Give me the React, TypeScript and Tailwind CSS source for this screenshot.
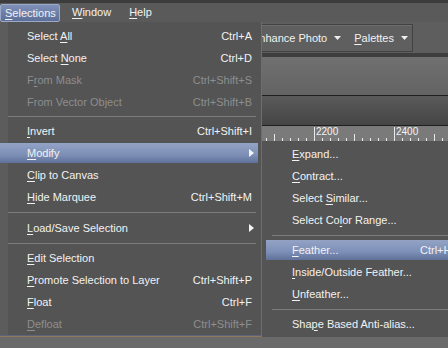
import React from "react";

type Item =
  | { sep: number }
  | { l: string; k?: string; d?: boolean; hi?: boolean; arrow?: boolean };

function Label({ t }: { t: string }) {
  const i = t.indexOf("&");
  if (i < 0) return <>{t}</>;
  return (
    <>
      {t.slice(0, i)}
      <span className="underline underline-offset-[2px] decoration-1">{t[i + 1]}</span>
      {t.slice(i + 2)}
    </>
  );
}

const mainItems: Item[] = [
  { l: "Select &All", k: "Ctrl+A" },
  { l: "Select &None", k: "Ctrl+D" },
  { l: "F&rom Mask", k: "Ctrl+Shift+S", d: true },
  { l: "From Vector Ob&ject", k: "Ctrl+Shift+B", d: true },
  { sep: 7 },
  { l: "&Invert", k: "Ctrl+Shift+I" },
  { l: "&Modify", hi: true, arrow: true },
  { l: "&Clip to Canvas" },
  { l: "&Hide Marquee", k: "Ctrl+Shift+M" },
  { sep: 9 },
  { l: "&Load/Save Selection", arrow: true },
  { sep: 8 },
  { l: "&Edit Selection" },
  { l: "&Promote Selection to Layer", k: "Ctrl+Shift+P" },
  { l: "&Float", k: "Ctrl+F" },
  { l: "&Defloat", k: "Ctrl+Shift+F", d: true },
];

const subItems: Item[] = [
  { l: "&Expand..." },
  { l: "&Contract..." },
  { l: "Select &Similar..." },
  { l: "Select Co&lor Range..." },
  { sep: 8 },
  { l: "&Feather...", k: "Ctrl+H", hi: true },
  { l: "&Inside/Outside Feather..." },
  { l: "&Unfeather..." },
  { sep: 8 },
  { l: "Sha&pe Based Anti-alias..." },
];

function Arrow() {
  return (
    <svg width="5" height="8" viewBox="0 0 5 8" className="absolute right-[4px] top-[6px]">
      <path d="M0 0 L5 4 L0 8 Z" fill="#f4f4f4" />
    </svg>
  );
}

function MainMenu() {
  return (
    <div className="absolute left-0 top-[22px] w-[262px] h-[315px] bg-[linear-gradient(to_right,#5c5c5c_8px,#545454_8px)] border-r border-r-[#6e6e6e] border-b border-b-[#8c7a5c] pt-[3px] shadow-[inset_0_-1px_0_#5d6478]">
      {mainItems.map((it, idx) =>
        "sep" in it ? (
          <div key={idx} className="flex items-center pl-[8px] pr-[5px]" style={{ height: it.sep }}>
            <div className="h-px w-full bg-[#7c7c7c]" />
          </div>
        ) : (
          <div key={idx} className="h-[22px] flex items-center">
            <div
              className={
                "relative flex items-center w-[258px] h-[20px] pl-[27px] pr-[6px] whitespace-nowrap " +
                (it.hi ? "bg-[linear-gradient(to_bottom,#93a3c6,#7d8fb6_60%,#5f7099)]" : "")
              }
            >
              <span className={"flex-1 " + (it.d ? "text-[#8e8e8e]" : "text-[#f2f2f2]")}>
                <Label t={it.l} />
              </span>
              {it.k && <span className={it.d ? "text-[#8e8e8e]" : "text-[#f2f2f2]"}>{it.k}</span>}
              {it.arrow && <Arrow />}
            </div>
          </div>
        )
      )}
    </div>
  );
}

function SubMenu() {
  return (
    <div className="absolute left-[262px] top-[141px] w-[186px] h-[196px] bg-[#545454] pt-[2px] pl-[4px] overflow-hidden">
      {subItems.map((it, idx) =>
        "sep" in it ? (
          <div key={idx} className="flex items-center pl-[6px]" style={{ height: it.sep }}>
            <div className="h-px w-full bg-[#7c7c7c]" />
          </div>
        ) : (
          <div key={idx} className="h-[22px] flex items-center">
            <div
              className={
                "relative flex items-center w-[200px] h-[20px] pl-[26px] whitespace-nowrap " +
                (it.hi ? "bg-[linear-gradient(to_bottom,#93a3c6,#7d8fb6_60%,#5f7099)]" : "")
              }
            >
              <span className="w-[128px] shrink-0 text-[#f2f2f2]">
                <Label t={it.l} />
              </span>
              {it.k && <span className="text-[#f2f2f2]">{it.k}</span>}
            </div>
          </div>
        )
      )}
    </div>
  );
}

function Ruler() {
  const ticks: React.ReactNode[] = [];
  for (let x = 4; x < 190; x += 8) {
    const ax = 262 + x;
    const isMajor = (ax - 314) % 80 === 0;
    const isMed = !isMajor && (ax - 274) % 40 === 0;
    const h = isMajor ? 15 : isMed ? 8 : 4;
    ticks.push(<line key={x} x1={x + 0.5} x2={x + 0.5} y1={16 - h} y2={16} stroke="#e8e8e8" strokeWidth="1" />);
  }
  return (
    <svg width="186" height="16" className="block">
      {ticks}
      <text x="54" y="9" fontSize="10" fill="#f4f4f4" fontFamily="Liberation Sans, Arial, sans-serif">2200</text>
      <text x="134" y="9" fontSize="10" fill="#f4f4f4" fontFamily="Liberation Sans, Arial, sans-serif">2400</text>
    </svg>
  );
}

export default function App() {
  return (
    <div className="relative w-[448px] h-[348px] overflow-hidden bg-[#6a6a6a] text-[11px] leading-none font-['Liberation_Sans',Arial,sans-serif] select-none">
      <div className="h-[3px] bg-[#3c3c3c]" />
      <div className="h-[19px] bg-[#5a5a5a] flex items-center text-[#f2f2f2] whitespace-nowrap">
        <div className="h-[18px] mt-[1px] w-[60px] flex items-center pl-[4px] bg-[linear-gradient(to_bottom,#7e90b8,#5d6f98)] border border-[#9aa9c9] rounded-[2px]">
          <Label t="&Selections" />
        </div>
        <div className="ml-[12px]">
          <Label t="&Window" />
        </div>
        <div className="ml-[18px]">
          <Label t="&Help" />
        </div>
      </div>
      <div className="h-[31px] bg-[#5e5e5e] flex items-start pt-[2px]">
        <div className="ml-[236px] w-[177px] h-[28px] shrink-0 border border-[#424242] bg-[#5f5f5f] flex items-center pl-[15px] text-[#f2f2f2] whitespace-nowrap shadow-[inset_1px_1px_0_#6e6e6e]">
          <span>Enhance Photo</span>
          <svg width="7" height="4" className="ml-[7px] shrink-0"><path d="M0 0 L7 0 L3.5 4 Z" fill="#eee" /></svg>
          <span className="ml-[13px]"><Label t="&Palettes" /></span>
          <svg width="7" height="4" className="ml-[7px] shrink-0"><path d="M0 0 L7 0 L3.5 4 Z" fill="#eee" /></svg>
        </div>
      </div>
      <div className="h-[4px] bg-[#3e3e3e]" />
      <div className="h-[38px] bg-[linear-gradient(to_bottom,#707070,#636363)]" />
      <div className="h-px bg-[#1f1f1f]" />
      <div className="h-[29px] bg-[linear-gradient(to_bottom,#5a5a5a,#454545)]" />
      <div className="h-px bg-[#1f1f1f]" />
      <div className="h-[16px] bg-[#7a7a7a] pl-[262px]">
        <Ruler />
      </div>
      <div className="h-[195px] bg-[#555555]" />
      <div className="h-[11px] bg-[#6a6a6a]" />

      <MainMenu />
      <SubMenu />
    </div>
  );
}
